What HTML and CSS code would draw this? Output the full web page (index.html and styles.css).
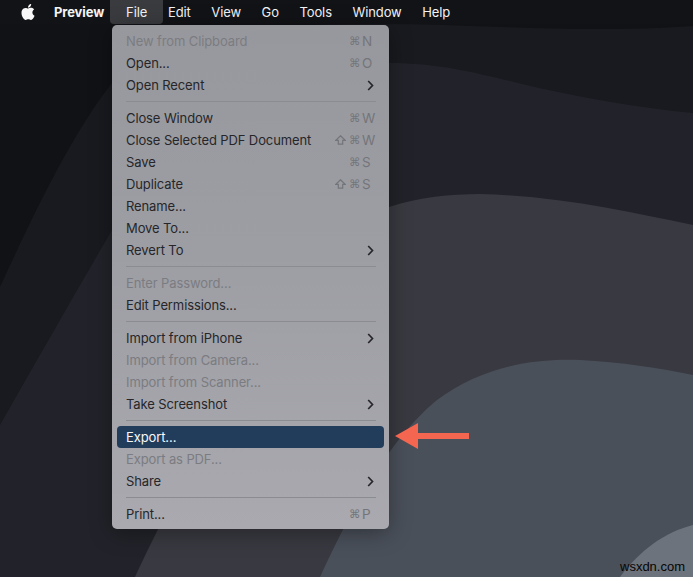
FILE: index.html
```html
<!DOCTYPE html>
<html lang="en">
<head>
<meta charset="utf-8">
<title>Preview File menu</title>
<link rel="stylesheet" href="styles.css">
</head>
<body>
<div class="desktop">
  <svg class="wallpaper" viewBox="0 0 693 577" aria-hidden="true">
    <rect class="w0" width="693" height="577"/>
    <path class="w1" d="M0 287C40 200 75 130 112 83C170 30 250 24 380 24C480 24 580 34 693 26V577H0Z"/>
    <path class="w2" d="M0 425C40 355 80 285 112 230C170 120 270 62 389 63C440 63 480 74 518 83C580 98 640 108 693 113V577H0Z"/>
    <path class="w3" d="M135 577C180 480 260 330 389 207C420 197 450 194 480 194C560 196 630 212 693 225V577Z"/>
    <path class="w4" d="M320 577C360 490 395 435 437 400C480 368 530 358 580 360C620 362 660 368 693 375V577Z"/>
    <path class="w5" d="M620 577C640 550 665 532 693 525V577Z"/>
  </svg>

  <nav class="menubar">
    <svg class="apple" viewBox="0 0 24 24" aria-hidden="true"><path d="M12.152 6.896c-.948 0-2.415-1.078-3.96-1.04-2.04.027-3.91 1.183-4.961 3.014-2.117 3.675-.546 9.103 1.519 12.09 1.013 1.454 2.208 3.09 3.792 3.039 1.52-.065 2.09-.987 3.935-.987 1.831 0 2.35.987 3.96.948 1.637-.026 2.676-1.48 3.676-2.948 1.156-1.688 1.636-3.325 1.662-3.415-.039-.013-3.182-1.221-3.22-4.857-.026-3.04 2.48-4.494 2.597-4.559-1.429-2.09-3.623-2.324-4.39-2.376-2-.156-3.675 1.09-4.61 1.09zM15.53 3.83c.843-1.012 1.4-2.427 1.245-3.83-1.207.052-2.662.805-3.532 1.818-.78.896-1.454 2.338-1.273 3.714 1.338.104 2.715-.688 3.559-1.701"/></svg>
    <span class="bar-item app">Preview</span>
    <span class="bar-item open">File</span>
    <span class="bar-item">Edit</span>
    <span class="bar-item">View</span>
    <span class="bar-item">Go</span>
    <span class="bar-item">Tools</span>
    <span class="bar-item">Window</span>
    <span class="bar-item">Help</span>
  </nav>

  <div class="menu">
    <div class="row off"><span class="label">New from Clipboard</span><span class="keys"><i>⌘</i><b>N</b></span></div>
    <div class="row"><span class="label">Open...</span><span class="keys"><i>⌘</i><b>O</b></span></div>
    <div class="row"><span class="label">Open Recent</span><svg class="chev" viewBox="0 0 7 11"><path d="M1.2 1l4.3 4.5L1.2 10"/></svg></div>
    <div class="sep"></div>
    <div class="row"><span class="label">Close Window</span><span class="keys"><i>⌘</i><b>W</b></span></div>
    <div class="row"><span class="label">Close Selected PDF Document</span><span class="keys"><svg class="shift" viewBox="0 0 11 10"><path d="M5.5 .8L10.2 5.4H7.7V9.2H3.3V5.4H.8Z"/></svg><i>⌘</i><b>W</b></span></div>
    <div class="row"><span class="label">Save</span><span class="keys"><i>⌘</i><b>S</b></span></div>
    <div class="row"><span class="label">Duplicate</span><span class="keys"><svg class="shift" viewBox="0 0 11 10"><path d="M5.5 .8L10.2 5.4H7.7V9.2H3.3V5.4H.8Z"/></svg><i>⌘</i><b>S</b></span></div>
    <div class="row"><span class="label">Rename...</span></div>
    <div class="row"><span class="label">Move To...</span></div>
    <div class="row"><span class="label">Revert To</span><svg class="chev" viewBox="0 0 7 11"><path d="M1.2 1l4.3 4.5L1.2 10"/></svg></div>
    <div class="sep"></div>
    <div class="row off"><span class="label">Enter Password...</span></div>
    <div class="row"><span class="label">Edit Permissions...</span></div>
    <div class="sep"></div>
    <div class="row"><span class="label">Import from iPhone</span><svg class="chev" viewBox="0 0 7 11"><path d="M1.2 1l4.3 4.5L1.2 10"/></svg></div>
    <div class="row off"><span class="label">Import from Camera...</span></div>
    <div class="row off"><span class="label">Import from Scanner...</span></div>
    <div class="row"><span class="label">Take Screenshot</span><svg class="chev" viewBox="0 0 7 11"><path d="M1.2 1l4.3 4.5L1.2 10"/></svg></div>
    <div class="sep"></div>
    <div class="row active"><span class="label">Export...</span></div>
    <div class="row off"><span class="label">Export as PDF...</span></div>
    <div class="row"><span class="label">Share</span><svg class="chev" viewBox="0 0 7 11"><path d="M1.2 1l4.3 4.5L1.2 10"/></svg></div>
    <div class="sep"></div>
    <div class="row"><span class="label">Print...</span><span class="keys"><i>⌘</i><b>P</b></span></div>
  </div>

  <svg class="arrow" viewBox="0 0 74 26" aria-hidden="true"><path d="M0 13L23 0V10H74V16H23V26Z"/></svg>
  <span class="watermark">wsxdn.com</span>
</div>
</body>
</html>
```
FILE: styles.css
```css
* { box-sizing: border-box; }
html, body { margin: 0; padding: 0; background: #121317; }
.desktop {
  position: relative;
  width: 693px;
  height: 577px;
  overflow: hidden;
  font-family: Inter, "Liberation Sans", sans-serif;
  font-size: 13px;
  letter-spacing: -0.11px;
}
.wallpaper { position: absolute; inset: 0; width: 693px; height: 577px; }
.w0 { fill: #111216; }
.w1 { fill: #191a1f; }
.w2 { fill: #22232a; }
.w3 { fill: #393941; }
.w4 { fill: #4a505a; }
.w5 { fill: #6c737c; }

.menubar {
  position: relative;
  display: flex;
  align-items: center;
  height: 24px;
  padding-left: 20px;
  background: #121317;
  color: #f4f4f5;
}
.apple { width: 16px; height: 16px; margin-right: 8px; fill: #f7f7f7; }
.bar-item { padding: 0 10.3px; line-height: 24px; }
.app { font-weight: 700; padding-left: 10px; padding-right: 11.5px; }
.open {
  margin: 0 -5.5px;
  padding: 0 16px;
  background: #3a3b3f;
  border-radius: 0 0 4px 4px;
}

.menu {
  position: relative;
  width: 277px;
  height: 504px;
  margin: 1px 0 0 112px;
  padding: 5px 5px 4px;
  border-radius: 5px;
  background: linear-gradient(180deg, #97989d 0%, #9d9ea4 45%, #a9a9af 100%);
  box-shadow: 0 4px 22px rgba(0, 0, 0, .35);
  color: #26262a;
}
.row {
  display: flex;
  align-items: center;
  justify-content: space-between;
  height: 22px;
  padding: 0 8px 0 9px;
  border-radius: 4px;
}
.off { color: #7b7c81; }
.active { background: #213d5b; color: #f5f7fa; }
.keys {
  display: flex;
  align-items: center;
  gap: 3px;
  color: #74757a;
}
.keys i { width: 10px; font: normal 11.5px "DejaVu Sans", sans-serif; text-align: center; }
.keys b { width: 14px; font-size: 13.5px; font-weight: 400; letter-spacing: 0; }
.shift {
  width: 11px;
  height: 10px;
  fill: none;
  stroke: #74757a;
  stroke-width: 1.2;
}
.chev {
  width: 7px;
  height: 11px;
  margin-right: 2px;
  fill: none;
  stroke: #26262a;
  stroke-width: 1.7;
}
.sep {
  height: 1px;
  margin: 5px 8px 5px 9px;
  background: #8b8c91;
}

.arrow {
  position: absolute;
  left: 395px;
  top: 423px;
  width: 74px;
  height: 26px;
  fill: #f4664f;
}
.watermark {
  position: absolute;
  left: 620px;
  top: 559px;
  font-family: "Liberation Sans", sans-serif;
  font-size: 13px;
  letter-spacing: 0;
  color: #050505;
}
```
